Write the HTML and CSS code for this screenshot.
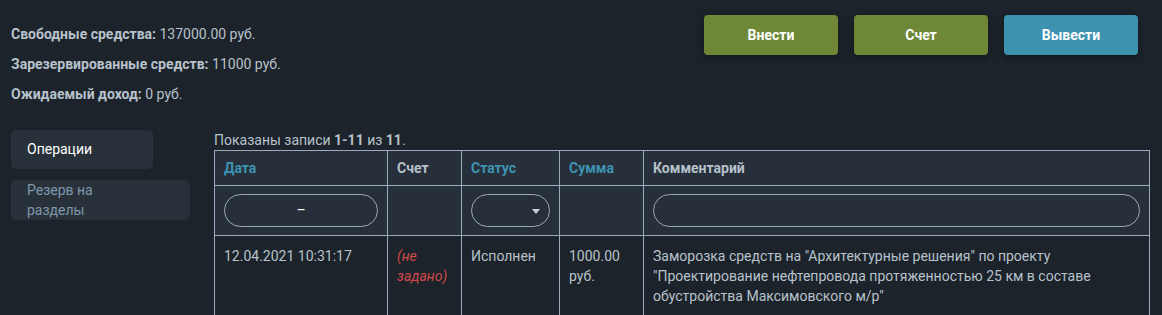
FILE: index.html
```html
<html>
    <head>
        <link rel="stylesheet" href="styles.css">
    </head>
    <body>
        <div class="page">
            <div class="top">
                <div class="balance">
                    <div><b>Свободные средства:</b> 137000.00 руб.</div>
                    <div><b>Зарезервированные средств:</b> 11000 руб.</div>
                    <div><b>Ожидаемый доход:</b> 0 руб.</div>
                </div>
                <div class="actions">
                    <button class="btn btn-green">Внести</button>
                    <button class="btn btn-green">Счет</button>
                    <button class="btn btn-blue">Вывести</button>
                </div>
            </div>

            <div class="content">
                <div class="side">
                    <a class="side-item active">Операции</a>
                    <a class="side-item wide"><span>Резерв на разделы</span></a>
                </div>

                <div class="main">
                    <div class="summary">Показаны записи <b>1-11</b> из <b>11</b>.</div>
                    <table class="grid">
                        <tr class="head">
                            <th class="c-date"><a>Дата</a></th>
                            <th class="c-acc">Счет</th>
                            <th class="c-status"><a>Статус</a></th>
                            <th class="c-sum"><a>Сумма</a></th>
                            <th class="c-comment">Комментарий</th>
                        </tr>
                        <tr class="filters">
                            <td><div class="field center">–</div></td>
                            <td></td>
                            <td><div class="field select"><span class="caret"></span></div></td>
                            <td></td>
                            <td><div class="field"></div></td>
                        </tr>
                        <tr class="row">
                            <td>12.04.2021 10:31:17</td>
                            <td><span class="not-set">(не задано)</span></td>
                            <td>Исполнен</td>
                            <td>1000.00 руб.</td>
                            <td>Заморозка средств на "Архитектурные решения" по проекту "Проектирование нефтепровода протяженностью 25 км в составе обустройства Максимовского м/р"</td>
                        </tr>
                    </table>
                </div>
            </div>
        </div>
    </body>
</html>
```

FILE: styles.css
```css
body {
    margin: 0;
    background: #1c232a;
    color: #b7c2cc;
    font-family: Roboto, "Liberation Sans", sans-serif;
    font-size: 14px;
    overflow: hidden;
}

.page {
    padding: 15px 12px 0 11px;
}

.top {
    display: flex;
    justify-content: space-between;
    align-items: flex-start;
}

.balance {
    padding-top: 4px;
    line-height: 30px;
}

.actions {
    display: flex;
    gap: 16px;
    padding-right: 12px;
}

.btn {
    width: 134px;
    height: 40px;
    border: none;
    border-radius: 4px;
    color: #fff;
    font-family: Roboto, "Liberation Sans", sans-serif;
    font-size: 14px;
    font-weight: bold;
    box-shadow: 0 3px 8px rgba(0, 0, 0, 0.35);
}

.btn-green {
    background: #6e8838;
}

.btn-blue {
    background: #3d92b0;
}

.content {
    display: flex;
    margin-top: 21px;
}

.side {
    width: 204px;
    display: flex;
    flex-direction: column;
    align-items: flex-start;
    gap: 11px;
}

.side-item {
    display: block;
    box-sizing: border-box;
    width: 142px;
    min-height: 39px;
    padding: 9px 16px;
    background: #28313a;
    border-radius: 5px;
    color: #7f98aa;
    line-height: 20px;
}

.side-item.active {
    color: #fff;
}

.side-item.wide {
    width: 179px;
    padding-top: 0;
    padding-bottom: 0;
}

.side-item.wide span {
    display: block;
    width: 90px;
}

.main {
    flex: 1;
}

.summary {
    line-height: 18px;
    margin-top: 1px;
    margin-bottom: 1px;
}

.grid {
    width: 936px;
    border-collapse: collapse;
    font-size: 14px;
}

.grid th,
.grid td {
    border: 1px solid #9aabbb;
    text-align: left;
    vertical-align: top;
}

.grid th {
    height: 35px;
    padding: 0 9px;
    vertical-align: middle;
    background: #27303a;
    color: #b7c2cc;
    font-weight: bold;
}

.grid th a {
    color: #3d93b2;
}

.c-date { width: 154px; }
.c-acc { width: 55px; }
.c-status { width: 79px; }
.c-sum { width: 65px; }

.filters td {
    height: 50px;
    padding: 8px 9px 0;
    background: #27303a;
    box-sizing: border-box;
}

.field {
    box-sizing: border-box;
    height: 33px;
    border: 1px solid #9aabbb;
    border-radius: 17px;
    background: #27303a;
    color: #fff;
    line-height: 31px;
}

.field.center {
    text-align: center;
}

.field.select {
    position: relative;
}

.caret {
    position: absolute;
    right: 9px;
    top: 14px;
    border-left: 4px solid transparent;
    border-right: 4px solid transparent;
    border-top: 5px solid #c9d2da;
}

.row td {
    height: 78px;
    padding: 10px 9px;
    background: #1c232a;
    line-height: 20px;
}

.not-set {
    color: #d24a4a;
    font-style: italic;
}
```
